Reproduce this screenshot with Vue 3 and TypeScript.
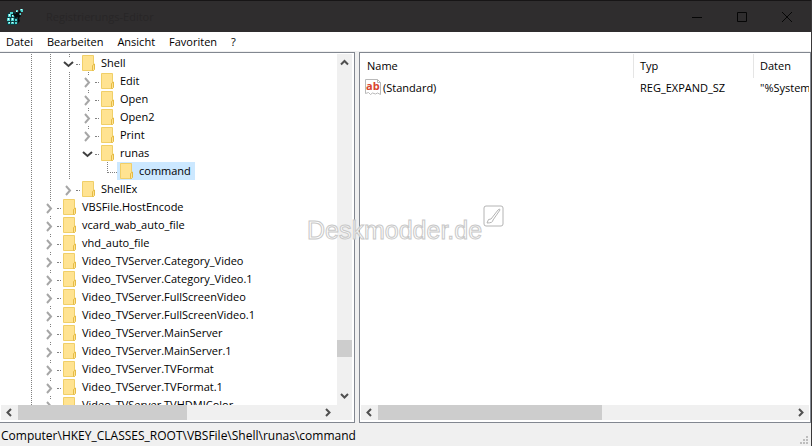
<script setup lang="ts">
interface Row {
  name: string
  depth: number
  state: 'open' | 'closed' | 'leaf'
  selected?: boolean
}

const menus: string[] = ['Datei', 'Bearbeiten', 'Ansicht', 'Favoriten', '?']

const rows: Row[] = [
  { name: 'Shell', depth: 3, state: 'open' },
  { name: 'Edit', depth: 4, state: 'closed' },
  { name: 'Open', depth: 4, state: 'closed' },
  { name: 'Open2', depth: 4, state: 'closed' },
  { name: 'Print', depth: 4, state: 'closed' },
  { name: 'runas', depth: 4, state: 'open' },
  { name: 'command', depth: 5, state: 'leaf', selected: true },
  { name: 'ShellEx', depth: 3, state: 'closed' },
  { name: 'VBSFile.HostEncode', depth: 2, state: 'closed' },
  { name: 'vcard_wab_auto_file', depth: 2, state: 'closed' },
  { name: 'vhd_auto_file', depth: 2, state: 'closed' },
  { name: 'Video_TVServer.Category_Video', depth: 2, state: 'closed' },
  { name: 'Video_TVServer.Category_Video.1', depth: 2, state: 'closed' },
  { name: 'Video_TVServer.FullScreenVideo', depth: 2, state: 'closed' },
  { name: 'Video_TVServer.FullScreenVideo.1', depth: 2, state: 'closed' },
  { name: 'Video_TVServer.MainServer', depth: 2, state: 'closed' },
  { name: 'Video_TVServer.MainServer.1', depth: 2, state: 'closed' },
  { name: 'Video_TVServer.TVFormat', depth: 2, state: 'closed' },
  { name: 'Video_TVServer.TVFormat.1', depth: 2, state: 'closed' },
  { name: 'Video_TVServer.TVHDMIColor', depth: 2, state: 'closed' },
]

// A branch line continues through an ancestor column while that ancestor has later siblings.
function hasLine(index: number, level: number): boolean {
  if (level === 0) return true
  for (let i = index + 1; i < rows.length; i++) {
    if (rows[i].depth < level + 1) return false
    if (rows[i].depth === level + 1) return true
  }
  return level === 1
}
</script>

<template>
  <div class="window">
    <header class="titlebar">
      <svg class="logo" width="16" height="17" viewBox="0 0 16 17">
        <path d="M0 6l3-2h6l2 2v9l-2 2H1l-1-1z" fill="#0f3c40" />
        <path d="M3 4h3v2H3zM1 6h3v3H1zM5 7h3v2H5zM0 10h3v3H0zM4 10h3v3H4zM8 11h2v2H8zM1 14h2v2H1zM4 14h3v2H4zM8 14h2v2H8zM9 2h2v2H9zM13 1h3v3h-3zM12 5h2v2h-2z" fill="#4fd3d0" />
        <path d="M6 5l3 1V4l2 1 2-3 1 2-2 2 2 2-2 2 1 3-2 2V9L8 10 7 8z" fill="#070b0c" />
        <path d="M2 6h1v2H2zM5 7h1v1H5zM1 10h1v2H1zM5 10h1v2H5zM2 14h1v1H2zM5 14h1v1H5zM14 1h1v1h-1zM9 3h1v1H9z" fill="#d9fbf8" />
      </svg>
      <span class="title">Registrierungs-Editor</span>
      <button class="caption" aria-label="Minimieren"><svg width="12" height="12"><path d="M1 6.5h10" /></svg></button>
      <button class="caption" aria-label="Maximieren"><svg width="12" height="12"><path d="M1.500 1.500h9v9h-9z" /></svg></button>
      <button class="caption" aria-label="Schließen"><svg width="12" height="12"><path d="M1 1l10 10M11 1L1 11" /></svg></button>
    </header>

    <nav class="menubar">
      <button v-for="m in menus" :key="m">{{ m }}</button>
    </nav>

    <main class="panes">
      <section class="pane tree-pane">
        <div class="tree" role="tree">
          <div v-for="(row, i) in rows" :key="row.name" class="row" role="treeitem">
            <span
              v-for="level in row.depth"
              :key="level"
              class="guide"
              :class="{
                line: level < row.depth && hasLine(i, level - 1),
                full: level === row.depth && row.state !== 'leaf' && hasLine(i, level - 1),
                elbow: row.state === 'leaf' && level === row.depth,
                last: level === row.depth,
              }"
            >
              <svg v-if="level === row.depth && row.state === 'closed'" class="chev closed" width="11" height="13"><path d="M3 2l4 4.500l-4 4.500" /></svg>
              <svg v-if="level === row.depth && row.state === 'open'" class="chev open" width="11" height="13"><path d="M1 4l4.500 4l4.500-4" /></svg>
            </span>
            <span class="entry" :class="{ selected: row.selected }">
              <svg class="folder" width="13" height="16" viewBox="0 0 13 16">
                <path d="M.5.500h11v15H.5z" fill="#ffe391" stroke="#f0cf68" />
                <path d="M10.500 15.500v-5l2-1.500v5.500l-1 1z" fill="#ffe391" stroke="#e5bb45" />
              </svg>
              <span class="label">{{ row.name }}</span>
            </span>
          </div>
        </div>
        <div class="vscroll">
          <button aria-label="Nach oben"><svg width="9" height="9"><path d="M1 6.500l3.500-3.500l3.500 3.500" /></svg></button>
          <span class="vtrack"><span class="vthumb"></span></span>
          <button aria-label="Nach unten"><svg width="9" height="9"><path d="M1 3l3.500 3.500l3.500-3.500" /></svg></button>
        </div>
        <div class="hscroll">
          <button aria-label="Nach links"><svg width="9" height="9"><path d="M6 1l-3.500 3.500l3.500 3.500" /></svg></button>
          <span class="htrack"><span class="hthumb"></span></span>
          <button aria-label="Nach rechts"><svg width="9" height="9"><path d="M3 1l3.500 3.500l-3.500 3.500" /></svg></button>
          <span class="corner"></span>
        </div>
      </section>

      <section class="pane list-pane">
        <div class="list">
          <table>
            <thead>
              <tr><th class="name">Name</th><th class="type">Typ</th><th>Daten</th></tr>
            </thead>
            <tbody>
              <tr>
                <td class="name">
                  <span class="value">
                    <svg width="16" height="16" viewBox="0 0 16 16">
                      <path d="M.5.500h12l3 3v12l-3-1.500-2 1-3-1-2 1.500-2-2-3 1z" fill="#fff" stroke="#b9b9b9" />
                      <path d="M12.500.500v3h3" fill="none" stroke="#b9b9b9" />
                      <text x="1" y="11">ab</text>
                    </svg>
                    (Standard)
                  </span>
                </td>
                <td class="type">REG_EXPAND_SZ</td>
                <td>"%System</td>
              </tr>
            </tbody>
          </table>
        </div>
        <div class="hscroll">
          <button aria-label="Nach links"><svg width="9" height="9"><path d="M6 1l-3.500 3.500l3.500 3.500" /></svg></button>
          <span class="htrack"><span class="hthumb"></span></span>
          <button aria-label="Nach rechts"><svg width="9" height="9"><path d="M3 1l3.500 3.500l-3.500 3.500" /></svg></button>
        </div>
      </section>
    </main>

    <footer class="status">
      <span>Computer\HKEY_CLASSES_ROOT\VBSFile\Shell\runas\command</span>
      <svg class="grip" width="9" height="9"><path d="M6 0h2v2H6zM3 3h2v2H3zM6 3h2v2H6zM0 6h2v2H0zM3 6h2v2H3zM6 6h2v2H6z" /></svg>
    </footer>

    <div class="watermark">
      <svg width="200" height="46" viewBox="0 0 200 46">
        <text x="1" y="34">Deskmodder.de</text>
        <rect x="178" y="1" width="19" height="20" rx="2" />
        <path d="M181 18q1-5 4-4l7-9q2-2 2 0l-7 10q0 3-6 3z" />
      </svg>
    </div>
  </div>
</template>

<style>
body {
  margin: 0;
}
</style>

<style scoped>
.window {
  position: relative;
  display: flex;
  flex-direction: column;
  height: 100vh;
  box-sizing: border-box;
  overflow: hidden;
  border-right: 1px solid #3a3839;
  background: #f0f0f0;
  color: #000;
  font-family: "Open Sans", "Noto Sans", sans-serif;
  font-size: 11px;
  line-height: 18px;
}
button {
  display: flex;
  align-items: center;
  justify-content: center;
  margin: 0;
  padding: 0;
  border: 0;
  background: none;
  color: inherit;
  font: inherit;
}
svg {
  display: block;
  flex: none;
}
.titlebar {
  display: flex;
  align-items: center;
  flex: none;
  height: 32px;
  box-sizing: border-box;
  padding: 0 2px 0 7px;
  border-top: 1px solid #171516;
  background: #2f2d2e;
}
.title {
  flex: 1;
  margin-left: 23px;
  color: #282627;
  font-size: 11px;
}
.caption {
  width: 45px;
  height: 31px;
}
.caption path {
  fill: none;
  stroke: #060606;
}
.menubar {
  display: flex;
  flex: none;
  gap: 14px;
  height: 18px;
  padding: 1px 6px 0;
  border-bottom: 1px solid #f0f0f0;
  background: #fff;
}
.panes {
  display: grid;
  flex: 1;
  grid-template-columns: 355px minmax(0, 1fr);
  gap: 4px;
  min-height: 0;
}
.pane {
  display: grid;
  min-width: 0;
  min-height: 0;
  padding: 1px 1px 2px;
  border: 1px solid #828790;
  background: #fff;
}
.tree-pane {
  grid-template: minmax(0, 1fr) 15px / minmax(0, 1fr) 15px;
  padding-right: 2px;
  border-left: 0;
}
.list-pane {
  grid-template: minmax(0, 1fr) 15px / minmax(0, 1fr);
}
.tree,
.list {
  overflow: hidden;
}
.tree {
  padding-left: 21px;
}
.row {
  display: flex;
  height: 18px;
}
.guide {
  position: relative;
  flex: none;
  width: 19px;
}
.line,
.full {
  background: repeating-linear-gradient(#808080 0 1px, #fff 1px 2px) 9px 0 / 1px 100% no-repeat;
}
.last::after {
  content: "";
  position: absolute;
  top: 10px;
  right: -1px;
  width: 4px;
  border-top: 1px dotted #808080;
}
.elbow {
  background: repeating-linear-gradient(#808080 0 1px, #fff 1px 2px) 9px 0 / 1px 11px no-repeat;
}
.elbow::after {
  right: 0;
  width: 10px;
}
.chev {
  margin: 4px 0 0 3px;
  background: #fff;
  fill: none;
  stroke: #a6a6a6;
  stroke-width: 2;
}
.chev.open {
  stroke: #404040;
}
.entry {
  display: flex;
  align-items: center;
  padding: 0 4px 0 3px;
  white-space: nowrap;
}
.selected {
  background: #cce8ff;
}
.label {
  margin-left: 6px;
}
.vscroll {
  display: flex;
  flex-direction: column;
  padding-bottom: 1px;
  background: #f0f0f0;
}
.vscroll button {
  height: 17px;
}
.vtrack {
  display: flex;
  flex: 1;
  flex-direction: column;
}
.vtrack::before {
  content: "";
  flex: 270;
}
.vtrack::after {
  content: "";
  flex: 30;
}
.vthumb {
  height: 17px;
  background: #cdcdcd;
}
.hscroll {
  display: flex;
  grid-column: 1 / -1;
  background: #f0f0f0;
}
.hscroll button {
  width: 17px;
}
.vscroll path,
.hscroll path {
  fill: none;
  stroke: #505050;
  stroke-width: 2;
}
.htrack {
  flex: 1;
}
.hthumb {
  display: block;
  width: 54%;
  height: 100%;
  background: #cdcdcd;
}
.tree-pane .hthumb {
  width: 56%;
}
.corner {
  width: 16px;
}
table {
  width: 100%;
  border-spacing: 0;
  table-layout: fixed;
}
th,
td {
  padding: 0 0 0 6px;
  text-align: left;
  font-weight: 400;
  white-space: nowrap;
  overflow: hidden;
}
th {
  height: 24px;
  border-right: 1px solid #e5e5e5;
}
th:last-child {
  border-right: 0;
}
td {
  height: 20px;
}
.name {
  width: 266px;
}
.type {
  width: 113px;
}
td.name {
  padding-left: 4px;
}
.value {
  display: flex;
  gap: 2px;
}
.value text {
  fill: #d8452f;
  font: 700 11px "Open Sans", sans-serif;
}
.status {
  display: flex;
  align-items: flex-end;
  justify-content: space-between;
  flex: none;
  height: 22px;
  padding: 0 2px 1px 1px;
  font-size: 12px;
}
.grip {
  fill: #bdbdbd;
}
.watermark {
  position: absolute;
  top: 205px;
  left: 306px;
  pointer-events: none;
}
.watermark text {
  fill: #fff;
  fill-opacity: 0.8;
  stroke: #c8c8c8;
  font: 25px "Liberation Sans", sans-serif;
}
.watermark rect,
.watermark path {
  fill: #fff;
  stroke: #b4b4b4;
}
</style>
